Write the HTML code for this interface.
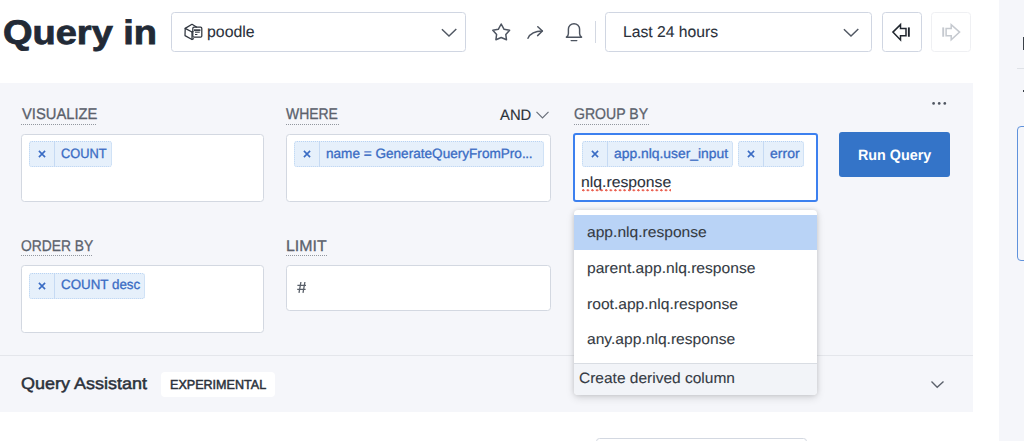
<!DOCTYPE html>
<html><head><meta charset="utf-8">
<style>
*{box-sizing:border-box;margin:0;padding:0}
html,body{width:1024px;height:441px;overflow:hidden;background:#fff;font-family:"Liberation Sans",sans-serif;position:relative}
.a{position:absolute}
.t{position:absolute;white-space:nowrap;line-height:1;transform-origin:0 0;text-rendering:geometricPrecision}
.box{position:absolute;background:#fff;border:1px solid #d3d8e1;border-radius:3.5px}
.ul{position:absolute;height:1px;background-image:linear-gradient(90deg,#80868f 50%,transparent 50%);background-size:2px 1px;opacity:.85}
.pill{position:absolute;background:#e6f0fb;border:1px dotted #b9d3f2;border-radius:3px}
.pdv{position:absolute;width:1px;background:#c6daf3}
svg{position:absolute;overflow:visible}
</style></head><body>
<div class="t" style="left:3.25px;top:15.7px;font-size:34.0px;font-weight:bold;color:#222a36;transform:scaleX(1.117);-webkit-text-stroke:0.8px #222a36;">Query in</div>
<div class="box" style="left:171px;top:12px;width:295px;height:40px;border-color:#d0d6e2"></div>
<svg style="left:180px;top:18px" width="30" height="26" viewBox="0 0 30 26" fill="none" stroke="#2f353e" stroke-width="1.25" stroke-linejoin="round" stroke-linecap="round">
 <path d="M16.5 9 L12 6.3 L5.2 10.4 L5 17.6 L12 21.5 L13.5 20.7"/><path d="M5.2 10.4 L12 14 L13 13.5"/><path d="M12 14 V21.3"/>
 <rect x="12.8" y="9.2" width="9" height="10" rx="1.2"/><path d="M14.4 11.8h5.6M14.4 12.6h5.6M15.4 14.2h4M15.4 16.5h1.6" stroke-width="1"/>
</svg>
<div class="t" style="left:207.14px;top:24.61px;font-size:15.9px;font-weight:normal;color:#2b313b;transform:scaleX(0.998);-webkit-text-stroke:0.1px #2b313b;">poodle</div>
<svg style="left:441px;top:28px" width="17" height="10" viewBox="0 0 17 10" fill="none" stroke="#515863" stroke-width="1.45"><path d="M0.9 1.2 L8 8.1 L15.3 1.0"/></svg>
<svg style="left:488px;top:18px" width="28" height="28" viewBox="0 0 28 28" fill="none" stroke="#4d5460" stroke-width="1.5" stroke-linejoin="round"><path d="M13.2 6 L16.1 11.3 L21.6 12.3 L17.8 16.5 L18.5 21.8 L13.2 19.5 L7.9 21.8 L8.6 16.5 L4.8 12.3 L10.3 11.3 Z"/></svg>
<svg style="left:526px;top:25px" width="19" height="15" viewBox="0 0 19 15" fill="none" stroke="#4d5460" stroke-width="1.5" stroke-linecap="round" stroke-linejoin="round"><path d="M2 13.2 C4 9 8 6 16.2 6"/><path d="M11.8 1.8 L16.4 6 L11.6 10.6"/></svg>
<svg style="left:565px;top:22px" width="19" height="20" viewBox="0 0 19 20" fill="none" stroke="#4d5460" stroke-width="1.45" stroke-linejoin="round" stroke-linecap="round"><path d="M1.4 15.2 C2.6 14.5 3.4 13.5 3.4 11.5 L3.4 7.3 A5.6 5.6 0 0 1 14.6 7.3 L14.6 11.5 C14.6 13.5 15.4 14.5 16.6 15.2 Z"/><path d="M6.2 18.6 H11.8"/></svg>
<div class="a" style="left:595px;top:21px;width:1px;height:22px;background:#d3d8e2"></div>
<div class="box" style="left:605px;top:12px;width:267px;height:40px;border-color:#d0d6e2"></div>
<div class="t" style="left:623.31px;top:24.71px;font-size:15.6px;font-weight:normal;color:#2b313b;transform:scaleX(1.007);-webkit-text-stroke:0.1px #2b313b;">Last 24 hours</div>
<svg style="left:843px;top:28px" width="17" height="10" viewBox="0 0 17 10" fill="none" stroke="#515863" stroke-width="1.45"><path d="M0.9 1.2 L8 8.1 L15.3 1.0"/></svg>
<div class="box" style="left:881.5px;top:12px;width:40px;height:40px;border-color:#d0d6e2"></div>
<svg style="left:891px;top:23px" width="20" height="19" viewBox="0 0 20 19" fill="none" stroke="#20262e" stroke-width="1.5" stroke-linejoin="miter"><path d="M1.9 9.1 L9.5 1.6 L9.5 5.5 L15 5.5 L15 12.7 L9.5 12.7 L9.5 16.9 Z"/><path d="M17.85 4.4 V13.75" stroke-width="1.9"/></svg>
<div class="box" style="left:930.5px;top:12px;width:40px;height:40px;border:1px solid #eff0f3"></div>
<svg style="left:941px;top:23px" width="20" height="19" viewBox="0 0 20 19" fill="none" stroke="#c5c9cf" stroke-width="1.5" stroke-linejoin="miter"><path d="M18.6 9.1 L10.2 1.6 L10.2 5.5 L5.1 5.5 L5.1 12.7 L10.2 12.7 L10.2 16.9 Z"/><path d="M2.2 4.4 V13.75" stroke-width="1.9"/></svg>
<div class="a" style="left:999px;top:0;width:25px;height:441px;background:#f5f6fa"></div>
<div class="a" style="left:1022.5px;top:36.5px;width:1.5px;height:13px;background:#3a4048"></div>
<div class="a" style="left:1017px;top:67.5px;width:7px;height:1px;background:#dfe2e7"></div>
<div class="a" style="left:1022.5px;top:90.3px;width:1.5px;height:1.5px;background:#3a4048"></div>
<div class="a" style="left:1017px;top:126px;width:20px;height:135px;border:1.5px solid #5f92dc;border-radius:4px;background:transparent"></div>
<div class="a" style="left:0;top:83px;width:973px;height:328.5px;background:#f5f6fa"></div>
<div class="t" style="left:21.61px;top:107.34px;font-size:15.5px;font-weight:normal;color:#5b616c;transform:scaleX(0.952);-webkit-text-stroke:0.3px #5b616c;">VISUALIZE</div>
<div class="ul" style="left:21px;top:124px;width:76px"></div>
<div class="box" style="left:21px;top:134px;width:243px;height:67.6px"></div>
<div class="pill" style="left:29px;top:141px;width:83px;height:26px"></div><div class="pdv" style="left:54px;top:142px;height:24px"></div>
<svg style="left:37.8px;top:150px" width="8" height="8" viewBox="0 0 8 8"><path d="M0.9 0.9 L7.1 7.1 M7.1 0.9 L0.9 7.1" stroke="#3a6cc4" stroke-width="1.6" stroke-linecap="butt"/></svg>
<div class="t" style="left:61.25px;top:146.58px;font-size:13.5px;font-weight:normal;color:#3a6cc4;transform:scaleX(0.951);-webkit-text-stroke:0.3px #3a6cc4;">COUNT</div>
<div class="t" style="left:286.29px;top:107.34px;font-size:15.5px;font-weight:normal;color:#5b616c;transform:scaleX(0.9);-webkit-text-stroke:0.3px #5b616c;">WHERE</div>
<div class="ul" style="left:286px;top:124px;width:53px"></div>
<div class="t" style="left:500.29px;top:107.94px;font-size:15px;font-weight:normal;color:#2b313b;transform:scaleX(0.988);-webkit-text-stroke:0.15px #2b313b;">AND</div>
<svg style="left:536px;top:111px" width="14" height="8" viewBox="0 0 14 8" fill="none" stroke="#6a707a" stroke-width="1.2"><path d="M0.5 0.8 L6.5 6.8 L12.5 0.8"/></svg>
<div class="box" style="left:286px;top:134px;width:265px;height:67.6px"></div>
<div class="pill" style="left:294px;top:141px;width:250px;height:26px"></div><div class="pdv" style="left:319px;top:142px;height:24px"></div>
<svg style="left:302.8px;top:150px" width="8" height="8" viewBox="0 0 8 8"><path d="M0.9 0.9 L7.1 7.1 M7.1 0.9 L0.9 7.1" stroke="#3a6cc4" stroke-width="1.6" stroke-linecap="butt"/></svg>
<div class="t" style="left:326.09px;top:146.58px;font-size:13.5px;font-weight:normal;color:#3a6cc4;transform:scaleX(1.006);-webkit-text-stroke:0.3px #3a6cc4;">name = GenerateQueryFromPro<span style="letter-spacing:-0.4px">.</span><span style="letter-spacing:-0.4px">.</span>.</div>
<div class="t" style="left:573.8px;top:107.14px;font-size:15.5px;font-weight:normal;color:#5b616c;transform:scaleX(0.908);-webkit-text-stroke:0.3px #5b616c;">GROUP BY</div>
<div class="ul" style="left:574px;top:124px;width:75px"></div>
<div class="box" style="left:573px;top:132.5px;width:245px;height:69.5px;border:2px solid #3c80ef;border-radius:3px"></div>
<div class="pill" style="left:582px;top:141px;width:151px;height:26px"></div><div class="pdv" style="left:607px;top:142px;height:24px"></div>
<svg style="left:590.8px;top:150px" width="8" height="8" viewBox="0 0 8 8"><path d="M0.9 0.9 L7.1 7.1 M7.1 0.9 L0.9 7.1" stroke="#3a6cc4" stroke-width="1.6" stroke-linecap="butt"/></svg>
<div class="t" style="left:613.97px;top:146.7px;font-size:13.5px;font-weight:normal;color:#3a6cc4;transform:scaleX(1.027);-webkit-text-stroke:0.3px #3a6cc4;">app.nlq.user_input</div>
<div class="pill" style="left:738px;top:141px;width:66px;height:26px"></div><div class="pdv" style="left:763px;top:142px;height:24px"></div>
<svg style="left:746.8px;top:150px" width="8" height="8" viewBox="0 0 8 8"><path d="M0.9 0.9 L7.1 7.1 M7.1 0.9 L0.9 7.1" stroke="#3a6cc4" stroke-width="1.6" stroke-linecap="butt"/></svg>
<div class="t" style="left:769.51px;top:146.83px;font-size:13.5px;font-weight:normal;color:#3a6cc4;transform:scaleX(1.038);-webkit-text-stroke:0.3px #3a6cc4;">error</div>
<div class="t" style="left:581.2px;top:176.35px;font-size:14.8px;font-weight:normal;color:#2b313b;transform:scaleX(1.064);-webkit-text-stroke:0.1px #2b313b;">nlq.response</div>
<div class="a" style="left:582px;top:188.7px;width:89px;height:3px;background-image:radial-gradient(circle at 1.3px 1.3px,#ea5f4f 0.95px,rgba(234,95,79,0) 1.35px);background-size:4.6px 3px"></div>
<div class="a" style="left:839px;top:132px;width:111px;height:45px;background:#3474c8;border-radius:3px"></div>
<div class="t" style="left:857.61px;top:148.87px;font-size:14.9px;font-weight:bold;color:#ffffff;transform:scaleX(0.962);-webkit-text-stroke:0.0px #ffffff;">Run Query</div>
<svg style="left:931px;top:102px" width="16" height="4" viewBox="0 0 16 4" fill="#4f5661"><circle cx="2.6" cy="1.4" r="1.35"/><circle cx="8.2" cy="1.4" r="1.35"/><circle cx="13.8" cy="1.4" r="1.35"/></svg>
<div class="t" style="left:21.05px;top:238.84px;font-size:15.5px;font-weight:normal;color:#5b616c;transform:scaleX(0.893);-webkit-text-stroke:0.3px #5b616c;">ORDER BY</div>
<div class="ul" style="left:21px;top:255px;width:72px"></div>
<div class="box" style="left:21px;top:265px;width:243px;height:68px"></div>
<div class="pill" style="left:29px;top:273px;width:116px;height:26px"></div><div class="pdv" style="left:54px;top:274px;height:24px"></div>
<svg style="left:37.8px;top:282px" width="8" height="8" viewBox="0 0 8 8"><path d="M0.9 0.9 L7.1 7.1 M7.1 0.9 L0.9 7.1" stroke="#3a6cc4" stroke-width="1.6" stroke-linecap="butt"/></svg>
<div class="t" style="left:61.13px;top:277.95px;font-size:13.5px;font-weight:normal;color:#3a6cc4;transform:scaleX(0.99);-webkit-text-stroke:0.3px #3a6cc4;">COUNT desc</div>
<div class="t" style="left:285.86px;top:238.74px;font-size:15.5px;font-weight:normal;color:#5b616c;transform:scaleX(1.026);-webkit-text-stroke:0.3px #5b616c;">LIMIT</div>
<div class="ul" style="left:286px;top:255px;width:41px"></div>
<div class="box" style="left:286px;top:265px;width:265px;height:46px"></div>
<svg style="left:290px;top:276px" width="24" height="22" viewBox="0 0 24 22" fill="none" stroke="#5a606a" stroke-width="1.3"><path d="M10.9 6 L9 16.8 M14.9 6 L13 16.8 M7.4 9.3 H16 M7.2 13.3 H15.6"/></svg>
<div class="a" style="left:0;top:355px;width:973px;height:1px;background:#e4e6eb"></div>
<div class="t" style="left:21.2px;top:376.12px;font-size:16.5px;font-weight:normal;color:#2b313b;transform:scaleX(1.09);-webkit-text-stroke:0.5px #2b313b;">Query Assistant</div>
<div class="a" style="left:161px;top:372px;width:114px;height:25px;background:#fff;border-radius:4px"></div>
<div class="t" style="left:169.76px;top:377.95px;font-size:13.1px;font-weight:normal;color:#2b313b;transform:scaleX(0.96);-webkit-text-stroke:0.5px #2b313b;">EXPERIMENTAL</div>
<svg style="left:930px;top:380px" width="15" height="9" viewBox="0 0 15 9" fill="none" stroke="#5b616b" stroke-width="1.35"><path d="M1.5 1.6 L7.2 7.3 L13.5 1.4"/></svg>
<div class="a" style="left:574px;top:210px;width:243px;height:185px;background:#fff;border-radius:4px;box-shadow:0 0 5px rgba(0,0,0,0.13),0 3px 8px rgba(0,0,0,0.12)"></div>
<div class="a" style="left:574px;top:214.5px;width:243px;height:35.5px;background:#b9d3f6"></div>
<div class="t" style="left:587.0px;top:226.4px;font-size:14.8px;font-weight:normal;color:#353b44;transform:scaleX(1.055);-webkit-text-stroke:0.1px #353b44;">app.nlq.response</div>
<div class="t" style="left:587.0px;top:262.0px;font-size:14.8px;font-weight:normal;color:#353b44;transform:scaleX(1.055);-webkit-text-stroke:0.1px #353b44;">parent.app.nlq.response</div>
<div class="t" style="left:587.0px;top:297.6px;font-size:14.8px;font-weight:normal;color:#353b44;transform:scaleX(1.055);-webkit-text-stroke:0.1px #353b44;">root.app.nlq.response</div>
<div class="t" style="left:587.0px;top:333.2px;font-size:14.8px;font-weight:normal;color:#353b44;transform:scaleX(1.055);-webkit-text-stroke:0.1px #353b44;">any.app.nlq.response</div>
<div class="a" style="left:574px;top:363px;width:243px;height:32px;background:#f2f4f8;border-top:1px solid #d9dde3;border-radius:0 0 4px 4px"></div>
<div class="t" style="left:579.16px;top:372.1px;font-size:14.9px;font-weight:normal;color:#353b44;transform:scaleX(1.041);-webkit-text-stroke:0.1px #353b44;">Create derived column</div>
<div class="box" style="left:596px;top:438px;width:211px;height:30px"></div>
</body></html>
